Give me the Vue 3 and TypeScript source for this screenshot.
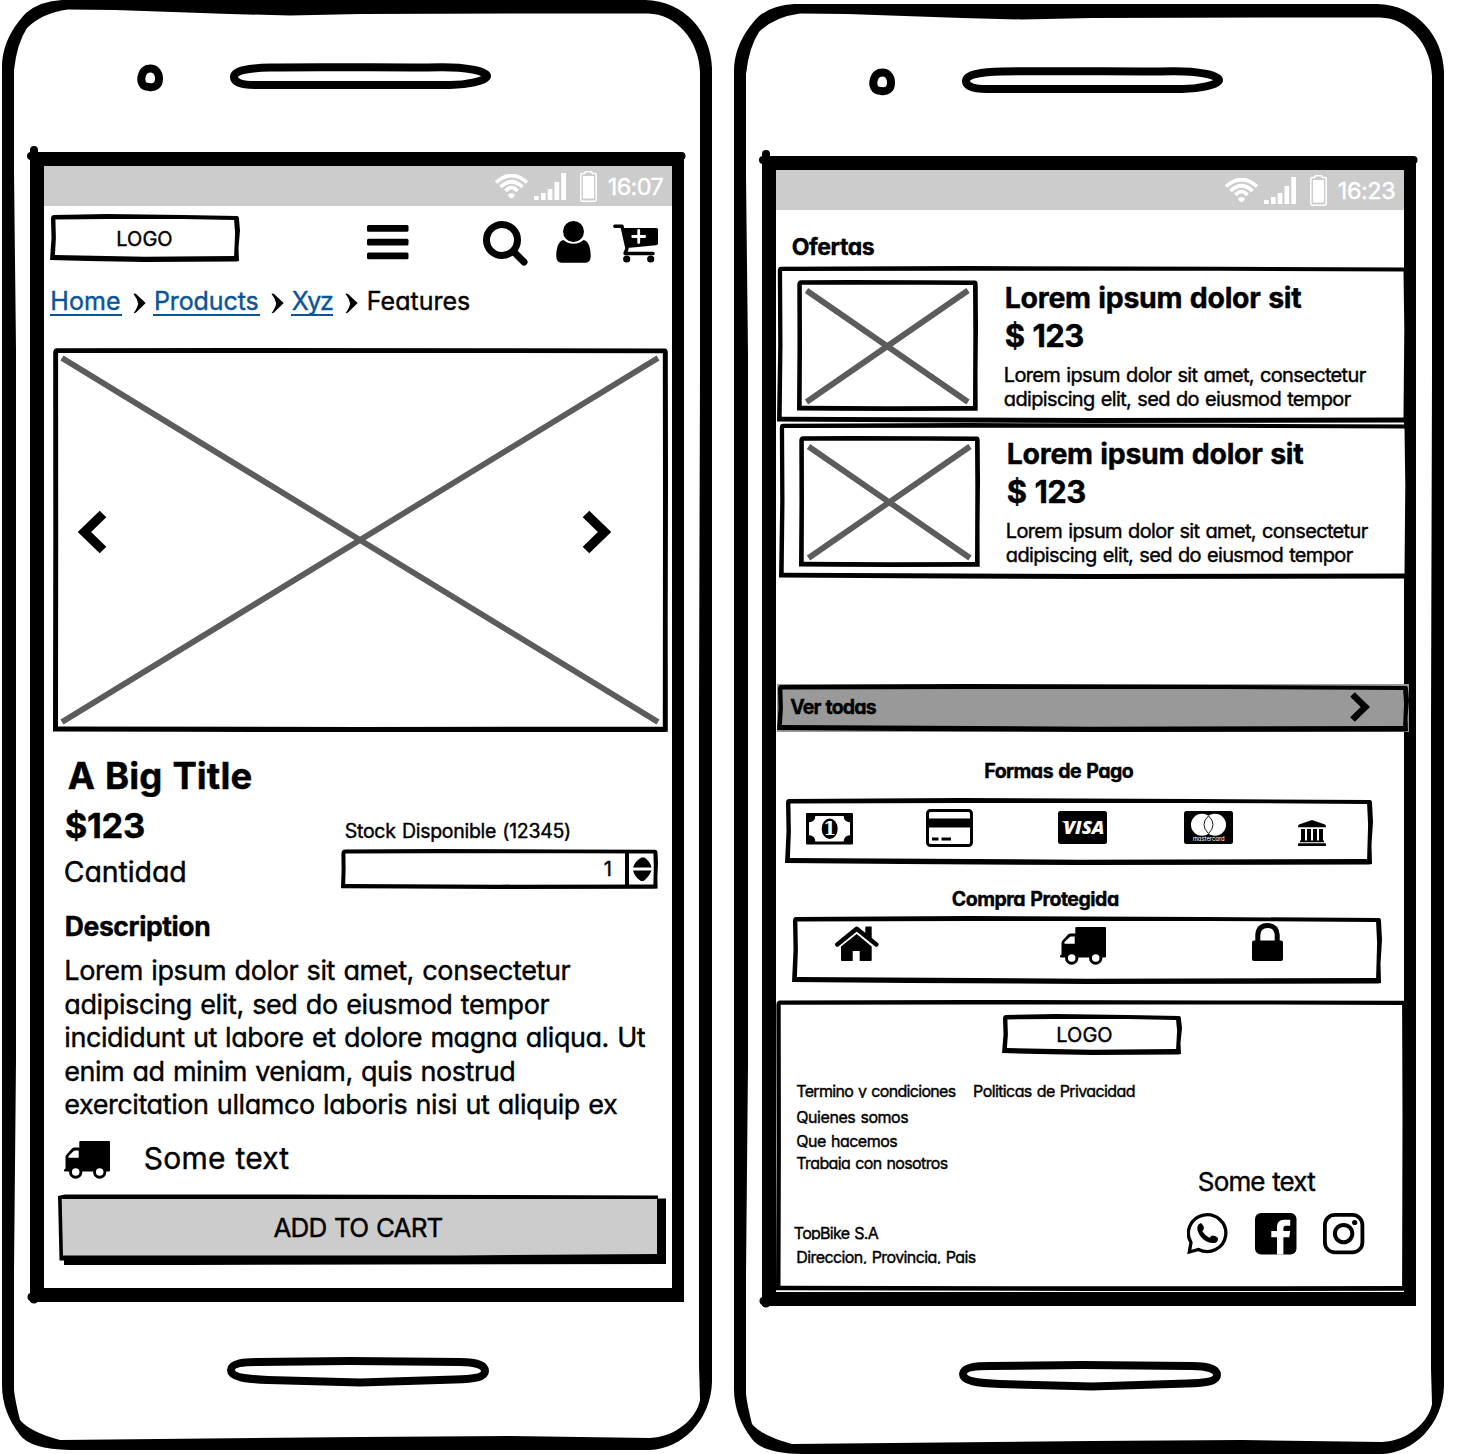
<script setup lang="ts">
import { h, type FunctionalComponent } from 'vue'

interface BoxProps { w: number; h: number; t?: number; k?: number; fill?: string }

// Hand-drawn rectangle outline: outer contour plus inner contour, filled even-odd.
function outline(w: number, hh: number, t: number, k: number): string {
  const outer =
    `M${k} 5Q${k} ${k} 4 ${k}L${w * 0.3} 0L${w * 0.7} ${k}L${w - 3} ${2 * k}` +
    `Q${w - k} ${2 * k} ${w - k} 5L${w} ${hh * 0.35}L${w - 1.5 * k} ${hh * 0.7}L${w - k} ${hh - k}` +
    `L${w - 4} ${hh - 0.5 * k}L${w * 0.5} ${hh}L${w * 0.2} ${hh - k}L0 ${hh - 2 * k}L${1.5 * k} ${hh * 0.5}Z`
  const inner =
    `M${t + 0.5 * k} ${t + 0.5 * k}L${w * 0.3} ${t}L${w * 0.7} ${t}L${w - t - k} ${t + k}` +
    `L${w - t} ${hh * 0.4}L${w - t - k} ${hh - t - k}L${w * 0.5} ${hh - t - 0.4 * k}` +
    `L${t} ${hh - t - 2 * k}L${t + k} ${hh * 0.5}Z`
  return outer + inner
}

const SketchBox: FunctionalComponent<BoxProps> = (p) => {
  const t = p.t ?? 4.9
  const k = p.k ?? 1
  return h('svg', { class: 'sketch', width: p.w, height: p.h, viewBox: `0 0 ${p.w} ${p.h}` }, [
    h('rect', { x: t / 2, y: t / 2, width: p.w - t, height: p.h - t, fill: p.fill ?? 'none' }),
    h('path', { d: outline(p.w, p.h, t, k), 'fill-rule': 'evenodd' }),
  ])
}
SketchBox.props = ['w', 'h', 't', 'k', 'fill']

const Icon: FunctionalComponent<{ name: string; w: number; h: number }> = (p) =>
  h('svg', { class: ['icon', p.name], width: p.w, height: p.h }, [h('use', { href: `#i-${p.name}` })])
Icon.props = ['name', 'w', 'h']

// Spreads the letters of a label so that it takes the given width, side bearings included.
const BEARING = 0.8
const vFit = {
  mounted(el: HTMLElement, binding: { value: number }) {
    const n = (el.textContent ?? '').trim().length
    const natural = el.getBoundingClientRect().width
    el.style.margin = `0 ${BEARING}px`
    if (n > 1) el.style.letterSpacing = `${(binding.value - 2 * BEARING - natural) / (n - 1)}px`
  },
}

const phones = [
  { id: 'product', time: '16:07', timeWidth: 57.5 },
  { id: 'home', time: '16:23', timeWidth: 59.5 },
]
const crumbs = [
  { label: 'Home', w: 72 },
  { label: 'Products', w: 106.5 },
  { label: 'Xyz', w: 43.5 },
]
const description = [
  { text: 'Lorem ipsum dolor sit amet, consectetur', w: 508 },
  { text: 'adipiscing elit, sed do eiusmod tempor', w: 487 },
  { text: 'incididunt ut labore et dolore magna aliqua. Ut', w: 583 },
  { text: 'enim ad minim veniam, quis nostrud', w: 453 },
  { text: 'exercitation ullamco laboris nisi ut aliquip ex', w: 555 },
]
const offers = [{ id: 'a', w: 632, h: 157 }, { id: 'b', w: 631, h: 156 }]
const links = [
  { id: 'who', text: 'Quienes somos', w: 114 },
  { id: 'what', text: 'Que hacemos', w: 103 },
  { id: 'jobs', text: 'Trabaja con nosotros', w: 153.5 },
  { id: 'company', text: 'TopBike S.A', w: 86.5 },
  { id: 'address', text: 'Direccion, Provincia, Pais', w: 181.5 },
]
</script>

<template>
  <main class="board">
    <svg class="defs" width="0" height="0">
      <symbol id="i-wifi" viewBox="0 0 33 25" width="33" height="25">
        <g fill="none" stroke="#fff" stroke-width="3.7">
          <path d="M1 8.5Q16.5-5.5 32 8.5" /><path d="M5.5 13Q16.5 2.5 27.5 13" /><path d="M10.5 17Q16.5 10 22.500 17" />
        </g>
        <path fill="#fff" d="M13 20.500Q16.500 18 20 20.500Q19.500 23 16.500 24.500Q13.500 23 13 20.500Z" />
      </symbol>
      <symbol id="i-signal" viewBox="0 0 32 27" width="32" height="27">
        <path fill="#fff" d="M0 23h4.700v4H0zM7 20h4.700v7H7zM13.700 16h4.700v11h-4.700zM20.500 9h4.700v18h-4.700zM27.300 0H32v27h-4.700z" />
      </symbol>
      <symbol id="i-battery" viewBox="0 0 17 31" width="17" height="31">
        <path fill="none" stroke="#fff" stroke-width="1.500" d="M2 2.500H4.500L5.500.8H11.500L12.500 2.500H15Q16.200 2.500 16.200 4V28.500Q16.200 30.200 15 30.200H2Q.8 30.200.8 28.500V4Q.8 2.500 2 2.500Z" />
        <rect x="3" y="5" width="11" height="22.500" fill="#fff" />
      </symbol>
      <symbol id="i-menu" viewBox="0 0 42 35" width="42" height="35">
        <rect width="41.500" height="6.800" rx="1.500" /><rect y="13.700" width="41.500" height="6.800" rx="1.500" /><rect y="27.400" width="41.500" height="6.800" rx="1.500" />
      </symbol>
      <symbol id="i-search" viewBox="0 0 46 46" width="46" height="46">
        <circle cx="19" cy="19" r="15.500" fill="none" stroke="#000" stroke-width="7" />
        <path d="M31 31L41 41" stroke="#000" stroke-width="7" stroke-linecap="round" />
      </symbol>
      <symbol id="i-user" viewBox="0 0 35 42" width="35" height="42">
        <circle cx="17.500" cy="10.500" r="10.500" />
        <path d="M7.300 19Q11.500 22.700 17.500 22.700T27.700 19C33 20 34.700 28 34.700 35Q34.700 41.700 29.500 41.700H5.500Q.3 41.700.3 35C.3 28 2 20 7.300 19Z" />
      </symbol>
      <symbol id="i-cart" viewBox="0 0 46 39" width="46" height="39">
        <path d="M1.800 2.200H9L14 24.500L12 29.500H40" fill="none" stroke="#000" stroke-width="3.400" stroke-linecap="round" stroke-linejoin="round" />
        <path d="M9 4H43.500Q45 4 45 5.500V19.500Q45 21 43 21.200L14 24Z" />
        <circle cx="13.700" cy="35" r="3.600" /><circle cx="37.700" cy="35" r="3.600" />
        <path d="M19.700 12.500H31.700M25.700 6.500V18.500" stroke="#fff" stroke-width="2.800" stroke-linecap="round" />
      </symbol>
      <symbol id="i-crumb" viewBox="0 0 13 21" width="13" height="21">
        <path d="M.5.7Q1.800.3 3 1L12.700 10L3 19.600Q1.500 20.600.5 20.300Q4.500 14.500 5.200 10.400Q4 5.500.5.700Z" />
      </symbol>
      <symbol id="i-truck" viewBox="0 0 47 38" width="47" height="38">
        <path d="M15.300 1Q15.300 0 16.300 0H45Q46 0 46 1V29.500Q46 30.500 45 30.500H.8Q0 30.500 0 29.200Q0 28 1.500 27.500V16Q1.500 14.500 3 13L8 7.500Q9 6.500 10.500 6.500H15.300Z" />
        <path fill="#fff" d="M4.500 16.700V15L9.500 10.300Q10.300 9.500 11.500 9.500H14.700V16.700Z" />
        <g stroke="#000" stroke-width="2.900" fill="#fff"><circle cx="11.700" cy="31" r="5.200" /><circle cx="35.700" cy="31" r="5.200" /></g>
      </symbol>
      <symbol id="i-card" viewBox="0 0 47 38" width="47" height="38">
        <rect x="1.500" y="1.500" width="44" height="35" rx="3" fill="none" stroke="#000" stroke-width="3" />
        <path d="M2 9.500H45V18.500H2ZM6 28.500h6.500v3H6ZM15.500 28.500h9.500v3h-9.500Z" />
      </symbol>
      <symbol id="i-bank" viewBox="0 0 28 26" width="28" height="26">
        <path d="M14 0L27 4.500Q28 5 28 7.300H0Q0 5 1 4.500ZM3 9h4v11.500H3ZM9 9h4v11.500H9ZM15 9h4v11.500h-4ZM21 9h4v11.500h-4ZM2 20.500h24v1.700H2ZM0 23.300h28V26H0Z" />
      </symbol>
      <symbol id="i-house" viewBox="0 0 44 35" width="44" height="35">
        <path d="M2.300 18.500L21.700 2.700L41.300 18.500" fill="none" stroke="#000" stroke-width="4.400" stroke-linecap="round" stroke-linejoin="round" />
        <path d="M30.300 1Q30.300.5 31 .5H36Q36.700.5 36.700 1V14L30.300 9ZM21.700 8L36.700 20.500V34Q36.700 35 35.700 35H24.700V25H17.700V35H7Q6 35 6 34V20.500Z" />
      </symbol>
      <symbol id="i-lock" viewBox="0 0 31 38" width="31" height="38">
        <rect y="17.500" width="31" height="20.500" rx="2" />
        <path d="M5.800 19V12Q6.500 2.500 15.500 2.500T25.200 12V19" fill="none" stroke="#000" stroke-width="5" />
      </symbol>
      <symbol id="i-whatsapp" viewBox="0 0 41 42" width="41" height="42">
        <path d="M4 29.500A18.700 18.400 0 1 1 11.500 36.500L2.300 39Z" fill="none" stroke="#000" stroke-width="3.300" />
        <path d="M14 10Q17 13 17 15Q17 16.500 15.300 18.300Q18 22.500 22.300 24.800Q24.500 22.500 26 22.500Q29 22.500 31 25Q31.300 30 26.500 30Q19 30 14 24Q10.300 19 10.300 15Q10.500 11 14 10Z" />
      </symbol>
      <symbol id="i-facebook" viewBox="0 0 42 42" width="42" height="42">
        <rect width="41.500" height="41.500" rx="6" />
        <path fill="#fff" d="M22 41.500V24.300H16.300V18H22V14Q22 7 29 6.800H35.200V12.800H31Q28.400 12.800 28.400 15.500V18H35.200L34.300 24.300H28.400V41.500Z" />
      </symbol>
      <symbol id="i-instagram" viewBox="0 0 42 42" width="42" height="42">
        <rect x="1.900" y="1.900" width="37.500" height="37.500" rx="10" fill="none" stroke="#000" stroke-width="3.800" />
        <circle cx="20.600" cy="20.600" r="8.700" fill="none" stroke="#000" stroke-width="4" /><circle cx="31.700" cy="9.500" r="2.600" />
      </symbol>
      <symbol id="i-prev" viewBox="0 0 29 44" width="29" height="44">
        <path d="M25 4L6.500 22L25 40" fill="none" stroke="#000" stroke-width="9.400" />
      </symbol>
      <symbol id="i-next" viewBox="0 0 29 44" width="29" height="44">
        <path d="M4 4L22.500 22L4 40" fill="none" stroke="#000" stroke-width="9.400" />
      </symbol>
      <symbol id="i-more" viewBox="0 0 20 30" width="20" height="30">
        <path d="M2.500 2.500L15.300 15L2.500 27.500" fill="none" stroke="#000" stroke-width="6.600" />
      </symbol>
    </svg>

    <section v-for="phone in phones" :key="phone.id" class="phone" :class="phone.id">
      <svg class="frame" width="732" height="1450" viewBox="0 0 732 1450">
        <path fill-rule="evenodd" d="M2 66C3 40 16 24 26 13Q40 1 62 0H645C685 1 711 32 712 68V1382C711 1420 682 1449 650 1450H360L70 1450Q30 1449 20 1435Q2 1412 2 1385Z
          M68 9.500L115 10L230 14L290 15.500L360 14L530 13.500H648C676 14 699 40 700 72V370L699 720V1365L700 1400C697 1417 677 1437 650 1438L510 1436L360 1437L60 1440Q30 1432 20 1420Q15 1400 14 1390V1270L16 1060V350L14 172V70Q17 43 27 28Q42 13 68 9.500Z" />
        <path fill-rule="evenodd" d="M30 152H682V1302H684V154V1302H30ZM44 166V1288H672V166Z" />
        <path d="M34 150V160M31 156H36M34 1290V1299.500M31.500 1297H36M675 156H681.500" fill="none" stroke="#000" stroke-width="8" stroke-linecap="round" />
        <path d="M672 156H684V1302H672Z" />
        <path d="M147 69C155 67 159 72 159 79C159 85 155 88 149 87C142 87 140 81 142 75Q143 71 147 69Z" fill="none" stroke="#000" stroke-width="8" />
        <path d="M234 77C234 70 250 68 270 67.500C330 66.500 400 68 440 67.300C465 67 487 71 487 76C487 81 465 85 450 85H255C243 85 234 83 234 77Z" fill="none" stroke="#000" stroke-width="8" />
        <path d="M231 1370C231 1363 245 1362 258 1362L350 1361L460 1362C475 1362 485 1365 485 1371C485 1377 475 1379 455 1379.500L360 1382.500L268 1380C245 1379 231 1377 231 1370Z" fill="none" stroke="#000" stroke-width="8" />
      </svg>

      <div class="screen">
        <div class="status">
          <Icon name="wifi" :w="33" :h="25" />
          <Icon name="signal" :w="32" :h="27" />
          <Icon name="battery" :w="17" :h="31" />
          <div class="time"><span v-fit="phone.timeWidth">{{ phone.time }}</span></div>
        </div>

        <template v-if="phone.id === 'product'">
          <header class="topbar">
            <div class="logo"><SketchBox :w="190" :h="48" /><span v-fit="58">LOGO</span></div>
            <Icon name="menu" :w="42" :h="35" />
            <Icon name="search" :w="46" :h="46" />
            <Icon name="user" :w="35" :h="42" />
            <Icon name="cart" :w="46" :h="39" />
          </header>

          <nav class="crumbs">
            <template v-for="c in crumbs" :key="c.label">
              <a><span v-fit="c.w">{{ c.label }}</span></a>
              <Icon name="crumb" :w="13" :h="21" />
            </template>
            <b><span v-fit="105">Features</span></b>
          </nav>

          <div class="hero">
            <SketchBox :w="615" :h="384" :t="5" :k="0.2" />
            <svg class="cross" width="615" height="384"><path d="M9 10L605 374M605 10L9 374" /></svg>
            <Icon name="prev" :w="29" :h="44" />
            <Icon name="next" :w="29" :h="44" />
          </div>

          <h1 class="title"><span v-fit="186">A Big Title</span></h1>
          <div class="buy">
            <div class="left">
              <div class="price"><span v-fit="82">$123</span></div>
              <div class="qty"><span v-fit="124.5">Cantidad</span></div>
            </div>
            <div class="right">
              <div class="stock"><span v-fit="228">Stock Disponible (12345)</span></div>
              <div class="stepper">
                <SketchBox :w="317" :h="40" :t="4.2" :k="0.4" />
                <div class="value">1</div>
                <svg class="arrows" width="33" height="40">
                  <path d="M0 2H4V37H0ZM8 18.500Q10 12 16.500 8.500H19.500Q25.500 13 26.500 18.500ZM8 21.500H26.500Q24 28 18.500 32H16Q10 28.500 8 21.500Z" />
                </svg>
              </div>
            </div>
          </div>

          <h2 class="subtitle"><span v-fit="147.5">Description</span></h2>
          <div class="copy">
            <div v-for="line in description" :key="line.text"><span v-fit="line.w">{{ line.text }}</span></div>
          </div>

          <div class="shipping">
            <Icon name="truck" :w="47" :h="38" />
            <div><span v-fit="147">Some text</span></div>
          </div>

          <div class="cta">
            <svg class="sketch" width="609" height="71">
              <path d="M1 2L8 .5L220 .5L601 1.500V4.500H609V70L130 71H7V66.500H2.500Z" />
              <path fill="#ccc" d="M4.700 5H600V60L400 61.500H6Z" />
            </svg>
            <span v-fit="171.5">ADD TO CART</span>
          </div>
        </template>

        <template v-else>
          <h2 class="offers-title"><span v-fit="84.5">Ofertas</span></h2>
          <article v-for="o in offers" :key="o.id" class="offer" :class="o.id">
            <SketchBox :w="o.w" :h="o.h" :t="4.700" :k="0.8" fill="#fff" />
            <div class="thumb">
              <SketchBox :w="181" :h="131" :t="4.700" :k="0.3" />
              <svg class="cross" width="181" height="131"><path d="M9.500 10.500L171 122M171 10.500L9.500 122" /></svg>
            </div>
            <div class="info">
              <h3><span v-fit="298.5">Lorem ipsum dolor sit</span></h3>
              <h4><span v-fit="81">$ 123</span></h4>
              <p><span v-fit="364">Lorem ipsum dolor sit amet, consectetur</span></p>
              <p><span v-fit="349">adipiscing elit, sed do eiusmod tempor</span></p>
            </div>
          </article>

          <div class="see-all">
            <SketchBox :w="632" :h="48" />
            <b><span v-fit="88">Ver todas</span></b>
            <Icon name="more" :w="20" :h="30" />
          </div>

          <h3 class="group pay-title"><span v-fit="151">Formas de Pago</span></h3>
          <div class="pay">
            <SketchBox :w="588" :h="67" />
            <svg class="cash" width="47" height="32">
              <rect width="47" height="31.500" rx="1" />
              <path fill="#fff" d="M9.300 3H37.700Q37.800 8.800 44 9.300V22.300Q37.800 22.800 37.700 28.500H9.300Q9.200 22.800 3 22.300V9.300Q9.200 8.800 9.300 3Z" />
              <ellipse cx="23.700" cy="15.700" rx="8" ry="10.300" />
              <text x="23.600" y="22.300" text-anchor="middle">1</text>
            </svg>
            <Icon name="card" :w="47" :h="38" />
            <svg class="visa" width="49" height="33">
              <rect width="49" height="33" rx="2.500" />
              <text x="5.500" y="23" textLength="41" lengthAdjust="spacingAndGlyphs">VISA</text>
              <path fill="#fff" d="M3.500 10.200H9L10.800 16Q8 12 3.500 10.200Z" />
            </svg>
            <svg class="mastercard" width="49" height="33">
              <rect width="49" height="33" rx="2.500" />
              <circle cx="18" cy="13.700" r="11" fill="#fff" /><circle cx="31" cy="13.700" r="11" fill="#fff" />
              <path d="M24.500 4.800Q29 9 29 13.700T24.500 22.600Q20 18.500 20 13.700T24.500 4.800Z" fill="none" stroke="#000" stroke-width=".9" />
              <text x="8.700" y="30" textLength="32" lengthAdjust="spacingAndGlyphs">mastercard</text>
            </svg>
            <Icon name="bank" :w="28" :h="26" />
          </div>

          <h3 class="group safe-title"><span v-fit="169">Compra Protegida</span></h3>
          <div class="safe">
            <SketchBox :w="590" :h="68" />
            <Icon name="house" :w="44" :h="35" />
            <Icon name="truck" :w="47" :h="38" />
            <Icon name="lock" :w="31" :h="38" />
          </div>

          <footer class="footer">
            <SketchBox :w="631" :h="291" :t="4.500" :k="0.4" />
            <div class="logo small"><SketchBox :w="180" :h="41" /><span v-fit="58">LOGO</span></div>
            <div class="columns">
              <div class="links">
                <div class="link pair"><span v-fit="161.5">Termino y condiciones</span><span v-fit="164">Politicas de Privacidad</span></div>
                <div v-for="l in links" :key="l.id" class="link" :class="l.id"><span v-fit="l.w">{{ l.text }}</span></div>
              </div>
              <div class="social">
                <div class="caption"><span v-fit="119.5">Some text</span></div>
                <div class="row">
                  <Icon name="whatsapp" :w="41" :h="42" />
                  <Icon name="facebook" :w="42" :h="42" />
                  <Icon name="instagram" :w="42" :h="42" />
                </div>
              </div>
            </div>
          </footer>
        </template>
      </div>
    </section>
  </main>
</template>

<style>
html, body { background: #fff; overflow: hidden; }
</style>

<style scoped>
.board {
  display: flex;
  width: 1458px;
  height: 1454px;
  overflow: hidden;
  font-family: Inter, "Noto Sans", sans-serif;
  font-feature-settings: "cv11", "calt" 0;
  color: #000;
  white-space: nowrap;
  word-spacing: .07em;
}
.defs { position: absolute; }
.board span { display: inline-block; -webkit-text-stroke: .4px currentColor; }
svg { display: block; flex: none; }
h1, h2, h3, h4, p { margin: 0; }
.phone { position: relative; flex: none; width: 732px; height: 1450px; }
.phone.home { margin-top: 4px; }
.frame { position: absolute; left: 0; top: 0; }
.screen { position: relative; width: 628px; margin: 166px 0 0 44px; }
.sketch { position: absolute; left: 0; top: 0; }
.sketch + span { position: relative; }

.status { display: flex; height: 40px; background: #ccc; color: #fff; }
.status .wifi { margin: 8px 0 0 450.5px; }
.status .signal { margin: 7px 0 0 6.5px; }
.status .battery { margin: 5px 0 0 14px; }
.status .time { margin-left: 10px; font-size: 23.5px; line-height: 42px; }
.home .status .wifi { margin-left: 448.5px; }

.topbar { display: flex; height: 66px; }
.logo { position: relative; width: 189px; height: 48px; margin: 8px 1px 0 6px; text-align: center; font-size: 20px; line-height: 50.5px; }
.topbar .menu { margin: 19px 0 0 127px; }
.topbar .search { margin: 15px 0 0 74px; }
.topbar .user { margin: 15px 0 0 27px; }
.topbar .cart { margin: 18px 0 0 22px; }

.crumbs { display: flex; height: 60px; padding: 16px 0 0 5.5px; font-size: 25px; line-height: 26px; }
.crumbs a { height: 25.5px; border-bottom: 2px solid #0b5597; color: #0b5597; }
.crumbs b { font-weight: 400; margin-left: 8.5px; }
.crumbs .crumb { margin: 5px 7px 0 11.5px; }
.crumbs .crumb:last-of-type { margin-right: 0; }

.hero { position: relative; display: flex; justify-content: space-between; width: 533px; height: 384px; margin-left: 9px; padding: 0 57px 0 25px; }
.hero .prev, .hero .next { position: relative; margin-top: 162px; }
.cross { position: absolute; left: 0; top: 0; fill: none; stroke: #5c5c5c; stroke-width: 5.8px; }

.title { margin: 21px 0 -1px 23px; font-size: 36.5px; line-height: 46px; font-weight: 700; }
.buy { display: flex; height: 93px; margin-left: 20px; }
.left { width: 277px; }
.price { font-size: 34.5px; line-height: 55px; font-weight: 700; }
.qty { font-size: 28.5px; line-height: 37px; margin-left: -1px; }
.stock { margin: 23px 0 0 3px; font-size: 19.5px; line-height: 20px; }
.stepper { position: relative; display: flex; justify-content: space-between; width: 317px; height: 40px; margin-top: 8px; }
.value { width: 271px; text-align: right; font-size: 20px; line-height: 41px; -webkit-text-stroke: .4px #000; }
.arrows { position: relative; }
.subtitle { margin: 17px 0 0 20px; font-size: 26.5px; line-height: 36px; font-weight: 700; }
.copy { margin: 10px 0 -1px 19.5px; font-size: 27px; line-height: 33.5px; }
.shipping { display: flex; height: 73.5px; margin-left: 20px; font-size: 30px; line-height: 74px; }
.shipping .truck { margin: 20px 32px 0 0; }
.cta { position: relative; width: 602px; height: 71px; margin-left: 13px; text-align: center; font-size: 26px; line-height: 67px; }

.offers-title { margin: 17px 0 -1px 15px; font-size: 23px; line-height: 40px; font-weight: 700; }
.offer { position: relative; display: flex; width: 629px; height: 157px; margin-left: 1px; }
.offer.b { height: 156px; margin-left: 3px; }
.thumb { position: relative; width: 181px; height: 131px; margin: 14px 0 0 20px; }
.offer.b .thumb { margin-top: 13px; }
.info { position: relative; margin: 13px 0 0 26px; }
.offer.b .info { margin-top: 12px; }
.info h3 { font-size: 28.5px; line-height: 38px; }
.info h4 { font-size: 31px; line-height: 38px; }
.info p { font-size: 20px; line-height: 24px; margin-left: -1px; }
.info h4 + p { margin-top: 8px; }

.see-all { position: relative; display: flex; justify-content: space-between; width: 580px; height: 48px; margin: 105px 0 0 1px; padding: 0 39px 0 12.5px; background: #999; }
.see-all b { position: relative; font-size: 19.5px; line-height: 46px; }
.see-all .more { position: relative; margin-top: 8px; }
.group { font-size: 19.5px; line-height: 30px; }
.pay-title { margin: 24px 0 0 207.5px; }
.safe-title { margin: 19px 0 0 175px; }
.pay { position: relative; display: flex; width: 588px; height: 67px; margin: 12px 0 0 9px; }
.pay svg text { fill: #fff; word-spacing: 0; }
.pay .cash { position: relative; margin: 14.5px 0 0 21px; }
.pay .cash text { font: 700 18.5px "DejaVu Serif", serif; }
.pay .card { margin: 11px 0 0 73px; }
.pay .visa { position: relative; margin: 13px 0 0 85px; }
.pay .visa text { font: italic 800 17.5px "Open Sans", sans-serif; }
.pay .mastercard { position: relative; margin: 13px 0 0 77px; }
.pay .mastercard text { font-size: 6px; }
.pay .bank { margin: 22px 0 0 65px; }
.safe { position: relative; display: flex; width: 590px; height: 68px; margin: 2px 0 0 16px; }
.safe .house { margin: 10px 0 0 43px; }
.safe .truck { margin: 11px 0 0 181px; }
.safe .lock { margin: 7px 0 0 145px; }

.footer { position: relative; display: flow-root; width: 628px; height: 292px; margin-top: 16px; }
.logo.small { width: 165px; height: 41px; margin: 14px 0 0 226px; line-height: 43px; }
.columns { display: flex; }
.links { width: 391.5px; margin: 28.5px 0 0 19.5px; font-size: 16px; }
.link { height: 14.5px; line-height: 14.5px; overflow: hidden; }
.pair { display: flex; gap: 16px; }
.who { margin-top: 11.5px; }
.what { margin-top: 9.5px; }
.jobs { margin-top: 7.5px; }
.company { margin: 55.5px 0 0 -2.5px; }
.address { margin-top: 9.5px; }
.caption { margin: 110px 0 0 10px; font-size: 26px; line-height: 33px; }
.row { display: flex; gap: 26.5px; margin-top: 15px; }
</style>
